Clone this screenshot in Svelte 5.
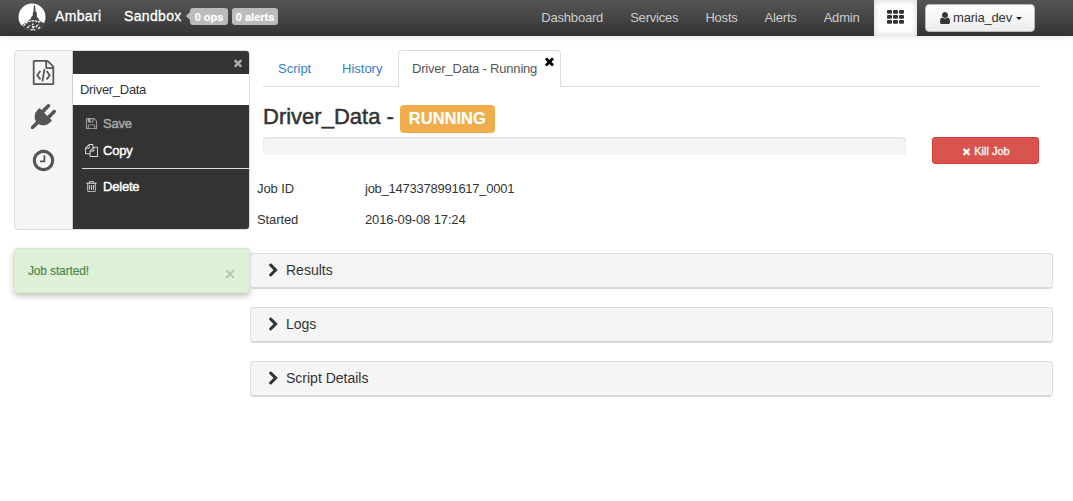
<script>
  const nav = ['Dashboard', 'Services', 'Hosts', 'Alerts', 'Admin'];
  const panels = ['Results', 'Logs', 'Script Details'];
  const icons = {
    times: 'M1490 1322q0 40-28 68l-136 136q-28 28-68 28t-68-28l-294-294-294 294q-28 28-68 28t-68-28l-136-136q-28-28-28-68t28-68l294-294-294-294q-28-28-28-68t28-68l136-136q28-28 68-28t68 28l294 294 294-294q28-28 68-28t68 28l136 136q28 28 28 68t-28 68l-294 294 294 294q28 28 28 68z',
    code: 'M1596 380q28 28 48 76t20 88v1152q0 40-28 68t-68 28h-1344q-40 0-68-28t-28-68v-1600q0-40 28-68t68-28h896q40 0 88 20t76 48zm-444-244v376h376q-10-29-22-41l-313-313q-12-12-41-22zm384 1528v-1024h-416q-40 0-68-28t-28-68v-416h-768v1536h1280zm-928-896q8-11 21-12.5t24 6.5l51 38q11 8 12.5 21t-6.5 24l-182 243 182 243q8 11 6.5 24t-12.5 21l-51 38q-11 8-24 6.5t-21-12.5l-226-301q-14-19 0-38zm802 301q14 19 0 38l-226 301q-8 11-21 12.5t-24-6.5l-51-38q-11-8-12.5-21t6.5-24l182-243-182-243q-8-11-6.5-24t12.5-21l51-38q11-8 24-6.5t21 12.5zm-620 461q-13-2-20.5-13t-5.5-24l138-831q2-13 13-20.5t24-5.5l63 10q13 2 20.5 13t5.5 24l-138 831q-2 13-13 20.5t-24 5.5z',
    plug: 'M1755 453q37 38 37 90.5t-37 90.5l-401 400 150 150-160 160q-163 163-389.5 186.5t-411.5-100.5l-362 362h-181v-181l362-362q-124-185-100.5-411.5t186.5-389.5l160-160 150 150 400-401q38-37 91-37t90 37 37 90.5-37 90.5l-400 401 234 234 401-400q38-37 91-37t90 37z',
    clock: 'M1024 544v448q0 14-9 23t-23 9h-320q-14 0-23-9t-9-23v-64q0-14 9-23t23-9h224v-352q0-14 9-23t23-9h64q14 0 23 9t9 23zm416 352q0-148-73-273t-198-198-273-73-273 73-198 198-73 273 73 273 198 198 273 73 273-73 198-198 73-273zm224 0q0 209-103 385.5t-279.5 279.5-385.5 103-385.5-103-279.5-279.5-103-385.5 103-385.5 279.5-279.5 385.5-103 385.5 103 279.5 279.5 103 385.5z',
    trash: 'M704 736v576q0 14-9 23t-23 9h-64q-14 0-23-9t-9-23v-576q0-14 9-23t23-9h64q14 0 23 9t9 23zm256 0v576q0 14-9 23t-23 9h-64q-14 0-23-9t-9-23v-576q0-14 9-23t23-9h64q14 0 23 9t9 23zm256 0v576q0 14-9 23t-23 9h-64q-14 0-23-9t-9-23v-576q0-14 9-23t23-9h64q14 0 23 9t9 23zm128 724v-948h-896v948q0 22 7 40.5t14.5 27 10.5 8.5h832q3 0 10.5-8.5t14.5-27 7-40.5zm-672-1076h448l-48-117q-7-9-17-11h-317q-10 2-17 11zm928 32v64q0 14-9 23t-23 9h-96v948q0 83-47 143.5t-113 60.5h-832q-66 0-113-58.5t-47-141.5v-952h-96q-14 0-23-9t-9-23v-64q0-14 9-23t23-9h309l70-167q15-37 54-63t79-26h320q40 0 79 26t54 63l70 167h309q14 0 23 9t9 23z',
    save: 'M512 1536h768v-384h-768v384zm896 0h128v-896q0-14-10-38.5t-20-34.5l-281-281q-10-10-34-20t-39-10v416q0 40-28 68t-68 28h-576q-40 0-68-28t-28-68v-416h-128v1280h128v-416q0-40 28-68t68-28h832q40 0 68 28t28 68v416zm-384-928v-320q0-13-9.5-22.5t-22.5-9.5h-192q-13 0-22.5 9.5t-9.5 22.5v320q0 13 9.5 22.5t22.5 9.5h192q13 0 22.5-9.5t9.5-22.5zm640 32v928q0 40-28 68t-68 28h-1344q-40 0-68-28t-28-68v-1344q0-40 28-68t68-28h928q40 0 88 20t76 48l280 280q28 28 48 76t20 88z',
    copy: 'M1696 384q40 0 68 28t28 68v1216q0 40-28 68t-68 28h-960q-40 0-68-28t-28-68v-288h-544q-40 0-68-28t-28-68v-672q0-40 20-88t48-76l408-408q28-28 76-48t88-20h416q40 0 68 28t28 68v328q68-40 128-40h416zm-544 213l-299 299h299v-299zm-640-384l-299 299h299v-299zm196 647l316-316v-416h-384v416q0 40-28 68t-68 28h-416v640h512v-256q0-40 20-88t48-76zm956 804v-1152h-384v416q0 40-28 68t-68 28h-416v640h896z',
    chevron: 'M1363 877l-742 742q-19 19-45 19t-45-19l-166-166q-19-19-19-45t19-45l531-531-531-531q-19-19-19-45t19-45l166-166q19-19 45-19t45 19l742 742q19 19 19 45t-19 45z',
    user: 'M1536 1399q0 109-62.5 187t-150.5 78h-854q-88 0-150.5-78t-62.5-187q0-85 8.5-160.5t31.5-152 58.5-131 94-89 134.5-34.5q131 128 313 128t313-128q76 0 134.5 34.5t94 89 58.5 131 31.5 152 8.5 160.5zm-256-887q0 159-112.5 271.5t-271.5 112.5-271.5-112.5-112.5-271.5 112.5-271.5 271.5-112.5 271.5 112.5 112.5 271.5z'
  };
</script>

{#snippet icon(name, size)}
  <svg class="icon" width={size} height={size} viewBox="0 0 1792 1792" fill="currentColor" aria-hidden="true"><path d={icons[name]} /></svg>
{/snippet}

<header>
  <svg class="logo" width="28" height="28" viewBox="0 0 28 28">
    <circle cx="14" cy="14" r="13.5" fill="#fff" />
    <path d="M15.9 2.5h1.2l.5 6 1.2.9v4.4l1.6 1.5 1.2 2.4 6 3.3-4 4.8-6.5 3.2H11l-6.2-4.5-.8-2.4 5.6-3.6 3.3-3 .6-1.7 1.3-1.4V9.4l.7-.7z" fill="#474747" />
    <path d="M5.5 22.8c3.5-4.8 9-6.6 17-3.4M9 25l3.2-2.6M14 21.8l1.5-1m2.3 3.4l2.5-2.8M20.3 25.8l2.1-2M12.6 27l2.4-.7 2.2.9" stroke="#fff" stroke-width="1.2" fill="none" stroke-dasharray="2.6 .6" />
    <circle cx="15.3" cy="24" r="1.2" fill="#fff" />
  </svg>
  <span class="brand">Ambari</span>
  <span class="cluster">Sandbox</span>
  <span class="badge ops">0 ops</span>
  <span class="badge">0 alerts</span>
  <nav>{#each nav as item}<a href="#top">{item}</a>{/each}</nav>
  <div class="grid-tab">
    <svg width="17" height="14" viewBox="0 0 17 14" fill="#333">
      {#each [0, 1, 2] as r}{#each [0, 1, 2] as c}<rect x={c * 6} y={r * 5} width="5" height="3.8" rx="1" />{/each}{/each}
    </svg>
  </div>
  <button class="user">{@render icon('user', 14)}<span>maria_dev</span><i></i></button>
</header>

<div class="page">
  <aside>
    <div class="side">
      <div class="rail">{@render icon('code', 25)}{@render icon('plug', 25)}{@render icon('clock', 25)}</div>
      <div class="menu">
        <div class="close">{@render icon('times', 12)}</div>
        <div class="name">Driver_Data</div>
        <div class="item muted">{@render icon('save', 13)}<span>Save</span></div>
        <div class="item">{@render icon('copy', 13)}<span>Copy</span></div>
        <hr />
        <div class="item">{@render icon('trash', 13)}<span>Delete</span></div>
      </div>
    </div>
    <div class="alert"><span>Job started!</span><svg width="10" height="10" viewBox="0 0 9 9"><path d="M1 1l7 7M8 1L1 8" stroke="#b4c7ae" stroke-width="1.8" /></svg></div>
  </aside>
  <main>
    <div class="tabs">
      <a class="script" href="#top">Script</a>
      <a class="history" href="#top">History</a>
      <div class="active"><span>Driver_Data - Running</span><b>{@render icon('times', 13)}</b></div>
    </div>
    <h1><span>Driver_Data -</span><strong>RUNNING</strong></h1>
    <div class="run">
      <div class="progress"></div>
      <button class="kill">{@render icon('times', 11)}<span>Kill Job</span></button>
    </div>
    <dl>
      <dt>Job ID</dt><dd class="jid">job_1473378991617_0001</dd>
      <dt>Started</dt><dd>2016-09-08 17:24</dd>
    </dl>
    {#each panels as title}
      <section>{@render icon('chevron', 15)}<span>{title}</span></section>
    {/each}
  </main>
</div>

<style>
  :global(body) { margin: 0; background: #fff; color: #333; font: 13px/18px "Liberation Sans", Arial, sans-serif; letter-spacing: -.2px; }
  * { box-sizing: border-box; }
  span, a, dt, dd { white-space: nowrap; }
  a { text-decoration: none; }
  button { font: inherit; letter-spacing: inherit; margin: 0; }
  .icon { display: block; flex: none; }
  header { height: 36px; display: flex; background: linear-gradient(#555, #353535); border-bottom: 1px solid #303030; box-shadow: 0 1px 6px rgba(0,0,0,.1); padding-left: 18px; }
  .logo { margin-top: 3px; flex: none; }
  .brand, .cluster { color: #fff; font-size: 14px; line-height: 33px; -webkit-text-stroke: .3px #fff; letter-spacing: .35px; }
  .brand { width: 69px; margin-left: 9px; }
  .cluster { width: 66px; }
  .badge { position: relative; height: 17px; margin-top: 8px; width: 46px; background: #bbb; color: #fff; border-radius: 3px; font-weight: bold; font-size: 11px; line-height: 19px; text-align: center; letter-spacing: 0; -webkit-text-stroke: .2px #fff; }
  .ops { width: 38px; margin-right: 4px; }
  .ops::before { content: ""; position: absolute; left: -4px; top: 4px; border: 4px solid transparent; border-left: 0; border-right-color: #bbb; }
  nav { display: flex; gap: 27px; margin-left: auto; color: #ccc; line-height: 35px; }
  nav a { color: #ccc; }
  .grid-tab { width: 43px; height: 36px; background: #fff; box-shadow: inset 0 0 7px rgba(0,0,0,.18); margin-left: 14.5px; padding: 10px 13px; }
  .user { width: 110px; height: 28px; margin: 4px 38px 0 8px; border: 1px solid #bbb; border-radius: 4px; background: linear-gradient(#fff, #ececec); color: #333; display: flex; align-items: center; justify-content: center; padding: 0; }
  .user span { margin: 0 4px 0 1px; letter-spacing: -.2px; }
  .user i { border: 3.5px solid transparent; border-top-color: #222; border-bottom: 0; }
  .page { display: flex; padding: 14px 20px 0 14px; }
  aside { width: 236px; flex: none; }
  .side { height: 180px; border: 1px solid #ddd; border-radius: 4px; display: flex; background: #f5f5f5; overflow: hidden; }
  .rail { width: 58px; color: #555; display: flex; flex-direction: column; align-items: center; padding: 9px 0 0; gap: 19px; border-right: 1px solid #ccc; }
  .menu { flex: 1; background: #333; color: #fff; }
  .close { height: 23px; display: flex; justify-content: flex-end; padding: 6px 5px; color: #aaa; }
  .name { height: 31px; background: #fff; color: #333; padding: 7px 7px; margin-bottom: 5px; letter-spacing: -.3px; }
  .item { height: 27px; display: flex; align-items: center; gap: 5px; padding-left: 12px; color: #ddd; }
  .item span { color: #fff; -webkit-text-stroke: .4px #fff; }
  .muted, .muted span { color: #aaa; -webkit-text-stroke-color: #aaa; }
  hr { border: 0; height: 1px; background: #ddd; margin: 4px 0 4px 9px; }
  .alert { height: 45px; margin-top: 18px; background: #dff0d8; border: 1px solid #d6e9c6; border-radius: 4px; color: #468847; box-shadow: 0 3px 6px rgba(0,0,0,.25); display: flex; justify-content: space-between; padding: 13px 14px 0 13px; font-size: 12px; letter-spacing: -.15px; -webkit-text-stroke: .15px #468847; }
  .alert svg { margin-top: 7px; }
  main { width: 803px; min-width: 0; }
  .tabs { height: 37px; width: 777px; margin-left: 13px; border-bottom: 1px solid #ddd; display: flex; line-height: 37px; }
  .tabs a { color: #337ec4; padding-left: 14px; letter-spacing: 0; }
  .tabs .script { width: 65px; padding-left: 15px; }
  .history { width: 70px; }
  .active { position: relative; height: 37px; width: 163px; border: 1px solid #ddd; border-bottom: 0; border-radius: 4px 4px 0 0; background: #fff; padding-left: 13px; color: #555; line-height: 36px; }
  .active b { position: absolute; right: 4px; top: 4px; color: #000; }
  h1 { display: flex; margin: 18px 0 0 13px; height: 28px; font-size: 22px; line-height: 24px; font-weight: normal; letter-spacing: 0; -webkit-text-stroke: .5px #333; }
  h1 strong { width: 95px; height: 28px; margin-left: 6px; border-radius: 4px; background: #f0ad4e; color: #fff; -webkit-text-stroke: .2px #fff; font-size: 16.5px; line-height: 27px; text-align: center; }
  .run { display: flex; margin: 4px 0 0 13px; height: 27px; }
  .progress { width: 643px; height: 18px; background: #f5f5f5; border-radius: 4px; box-shadow: inset 0 1px 2px rgba(0,0,0,.12); }
  .kill { width: 107px; height: 27px; margin-left: 26px; border: 1px solid #d43f3a; border-radius: 3px; background: #d9534f; color: #fff; font-size: 11px; display: flex; align-items: center; justify-content: center; gap: 2px; padding: 1px 0 0; letter-spacing: 0; -webkit-text-stroke: .3px #fff; }
  dl { display: grid; grid-template-columns: 108px 1fr; grid-auto-rows: 31px; margin: 16px 0 0 7px; height: 73px; }
  dt, dd { margin: 0; }
  dt { letter-spacing: -.1px; }
  dd { letter-spacing: -.13px; }
  .jid { letter-spacing: -.25px; }
  section { height: 36px; margin-bottom: 18px; border: 1px solid #ddd; border-bottom: 2px solid #d8d8d8; border-radius: 4px; background: #f5f5f5; display: flex; align-items: center; padding: 0 0 1px 15px; gap: 5px; font-size: 14px; letter-spacing: 0; }
</style>
